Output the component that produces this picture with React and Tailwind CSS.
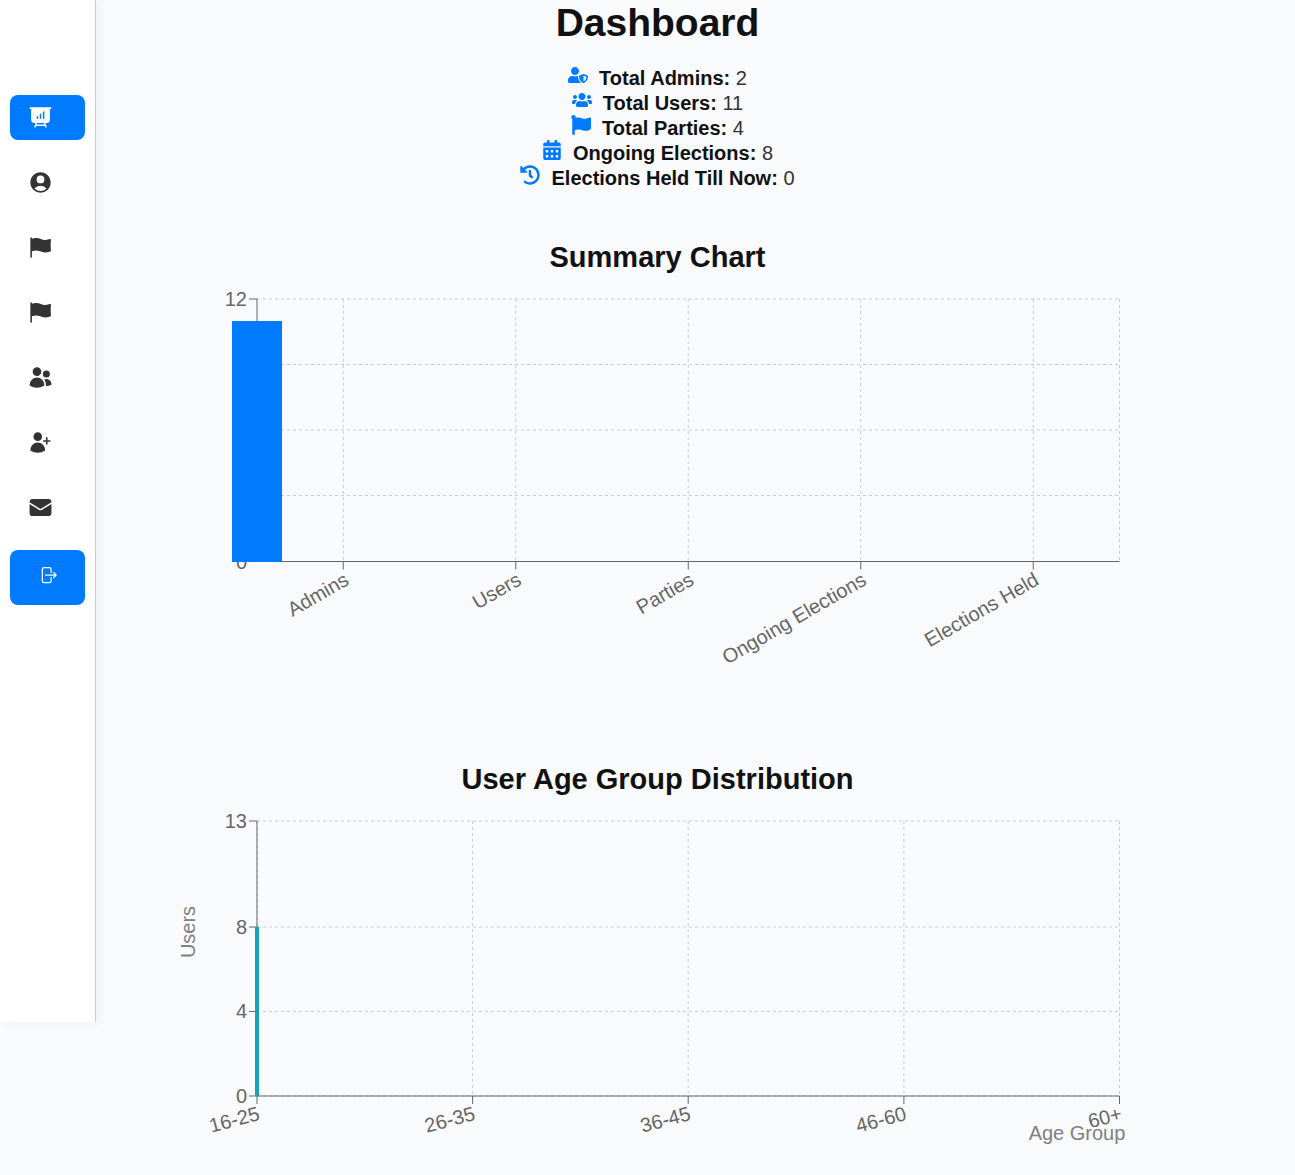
import {
  HiPresentationChartBar,
  HiUserCircle,
  HiFlag,
  HiUsers,
  HiUserPlus,
  HiEnvelope,
} from "react-icons/hi2";
import { FaUserShield, FaUsers, FaFlag, FaCalendarAlt, FaHistory } from "react-icons/fa";

const navItems = [
  { label: "Dashboard", Icon: HiPresentationChartBar, active: true },
  { label: "Profile", Icon: HiUserCircle },
  { label: "Elections", Icon: HiFlag },
  { label: "Parties", Icon: HiFlag },
  { label: "Users", Icon: HiUsers },
  { label: "Add user", Icon: HiUserPlus },
  { label: "Messages", Icon: HiEnvelope },
];

const stats = [
  { label: "Total Admins:", value: 2, Icon: FaUserShield },
  { label: "Total Users:", value: 11, Icon: FaUsers },
  { label: "Total Parties:", value: 4, Icon: FaFlag },
  { label: "Ongoing Elections:", value: 8, Icon: FaCalendarAlt },
  { label: "Elections Held Till Now:", value: 0, Icon: FaHistory },
];

const LEFT = 92;
const RIGHT = 954.5;

function LogOutIcon() {
  return (
    <svg
      viewBox="0 0 24 24"
      className="size-5"
      fill="none"
      stroke="currentColor"
      strokeWidth="1.5"
      strokeLinecap="round"
      strokeLinejoin="round"
      aria-hidden="true"
    >
      <path d="M15.75 9V5.25A2.25 2.25 0 0 0 13.5 3h-6a2.25 2.25 0 0 0-2.25 2.25v13.5A2.25 2.25 0 0 0 7.5 21h6a2.25 2.25 0 0 0 2.25-2.25V15m3 0 3-3m0 0-3-3m3 3H9" />
    </svg>
  );
}

function Sidebar() {
  return (
    <aside className="w-24 shrink-0 self-start border-r border-[#ccc] bg-white px-[10px] pt-[95px] pb-[417px] shadow-[2px_0_10px_rgba(0,0,0,0.05)]">
      <nav className="flex flex-col gap-5">
        {navItems.map(({ label, Icon, active }) => (
          <a
            key={label}
            href="#"
            aria-label={label}
            className={
              active
                ? "flex h-[45px] items-center rounded-lg bg-[#007bff] pl-[18px] text-white"
                : "flex h-[45px] items-center rounded-lg pl-[18px] text-[#333]"
            }
          >
            <Icon size={25} />
          </a>
        ))}
        <button
          type="button"
          aria-label="Log out"
          className="flex h-[55px] items-start rounded-lg bg-[#007bff] pt-[15px] pl-7 text-white"
        >
          <LogOutIcon />
        </button>
      </nav>
    </aside>
  );
}

function Grid({ top, bottom, xs, ys }) {
  return (
    <g stroke="#ccc" strokeDasharray="3 3">
      {ys.map((y) => (
        <line key={y} x1={LEFT} x2={RIGHT} y1={y} y2={y} />
      ))}
      {xs.map((x) => (
        <line key={x} x1={x} x2={x} y1={top} y2={bottom} />
      ))}
    </g>
  );
}

function XAxis({ y, ticks, angle }) {
  return (
    <g>
      <line x1={LEFT} x2={RIGHT} y1={y} y2={y} stroke="#666" />
      {ticks.map(({ x, label }) => (
        <g key={label} transform={`translate(${x} ${y})`}>
          <line y2="8" stroke="#666" />
          <text
            transform={`translate(0 10) rotate(${angle})`}
            y="14"
            textAnchor="end"
            fill="#666"
            fontSize="20"
          >
            {label}
          </text>
        </g>
      ))}
    </g>
  );
}

function YAxis({ top, bottom, ticks }) {
  return (
    <g>
      <line x1={LEFT} x2={LEFT} y1={top} y2={bottom} stroke="#666" />
      {ticks.map(({ y, label }) => (
        <g key={label}>
          <line x1={LEFT - 8} x2={LEFT} y1={y} y2={y} stroke="#666" />
          <text x={LEFT - 10} y={y + 7} textAnchor="end" fill="#666" fontSize="20">
            {label}
          </text>
        </g>
      ))}
    </g>
  );
}

function SummaryChart() {
  const top = 20;
  const bottom = 282.5;
  const ticks = [
    { x: 178.25, label: "Admins" },
    { x: 350.75, label: "Users" },
    { x: 523.25, label: "Parties" },
    { x: 695.75, label: "Ongoing Elections" },
    { x: 868.25, label: "Elections Held" },
  ];
  return (
    <svg viewBox="0 0 985 400" className="mt-1 block w-full" role="img" aria-label="Summary Chart">
      <Grid
        top={top}
        bottom={bottom}
        xs={[...ticks.map((t) => t.x), RIGHT]}
        ys={[20, 85.5, 151, 216.5, 282.5]}
      />
      <XAxis y={bottom} ticks={ticks} angle={-30} />
      <YAxis
        top={top}
        bottom={bottom}
        ticks={[
          { y: top, label: "12" },
          { y: bottom, label: "0" },
        ]}
      />
      <rect x="67" y="42" width="50" height="241" fill="#007bff" />
    </svg>
  );
}

function AgeChart() {
  const top = 20;
  const bottom = 295;
  const ticks = [
    { x: 92, label: "16-25" },
    { x: 307.6, label: "26-35" },
    { x: 523.2, label: "36-45" },
    { x: 738.9, label: "46-60" },
    { x: 954.5, label: "60+" },
  ];
  return (
    <svg
      viewBox="0 0 985 374"
      className="mt-1 block w-full"
      role="img"
      aria-label="User Age Group Distribution"
    >
      <Grid top={top} bottom={bottom} xs={ticks.map((t) => t.x)} ys={[20, 126, 210.4, 295]} />
      <XAxis y={bottom} ticks={ticks} angle={-15} />
      <YAxis
        top={top}
        bottom={bottom}
        ticks={[
          { y: 20, label: "13" },
          { y: 126, label: "8" },
          { y: 210.4, label: "4" },
          { y: 295, label: "0" },
        ]}
      />
      <rect x="90" y="126" width="4" height="169" fill="#17a2b8" />
      <text transform="translate(30 131) rotate(-90)" textAnchor="middle" fill="#808080" fontSize="20">
        Users
      </text>
      <text x="912" y="339" textAnchor="middle" fill="#808080" fontSize="20">
        Age Group
      </text>
    </svg>
  );
}

export default function App() {
  return (
    <div className="flex min-h-screen bg-[#f9fafc] font-['Liberation_Sans',Arial,sans-serif] text-xl text-[#333]">
      <Sidebar />
      <main className="min-w-0 flex-1 pr-[145px] pl-[69px]">
        <h1 className="text-center text-[39px] leading-[45px] font-bold text-[#111]">Dashboard</h1>
        <ul className="mt-5">
          {stats.map(({ label, value, Icon }) => (
            <li key={label} className="flex h-[25px] items-start justify-center gap-[11px] leading-[27px]">
              <Icon size={20} className="text-[#007bff]" />
              <span>
                <strong className="font-bold text-[#111]">{label}</strong> {value}
              </span>
            </li>
          ))}
        </ul>
        <section className="mt-[49px]">
          <h2 className="text-center text-[29px] leading-9 font-bold text-[#111]">Summary Chart</h2>
          <SummaryChart />
        </section>
        <section className="mt-[82px]">
          <h2 className="text-center text-[29px] leading-9 font-bold text-[#111]">
            User Age Group Distribution
          </h2>
          <AgeChart />
        </section>
      </main>
    </div>
  );
}
